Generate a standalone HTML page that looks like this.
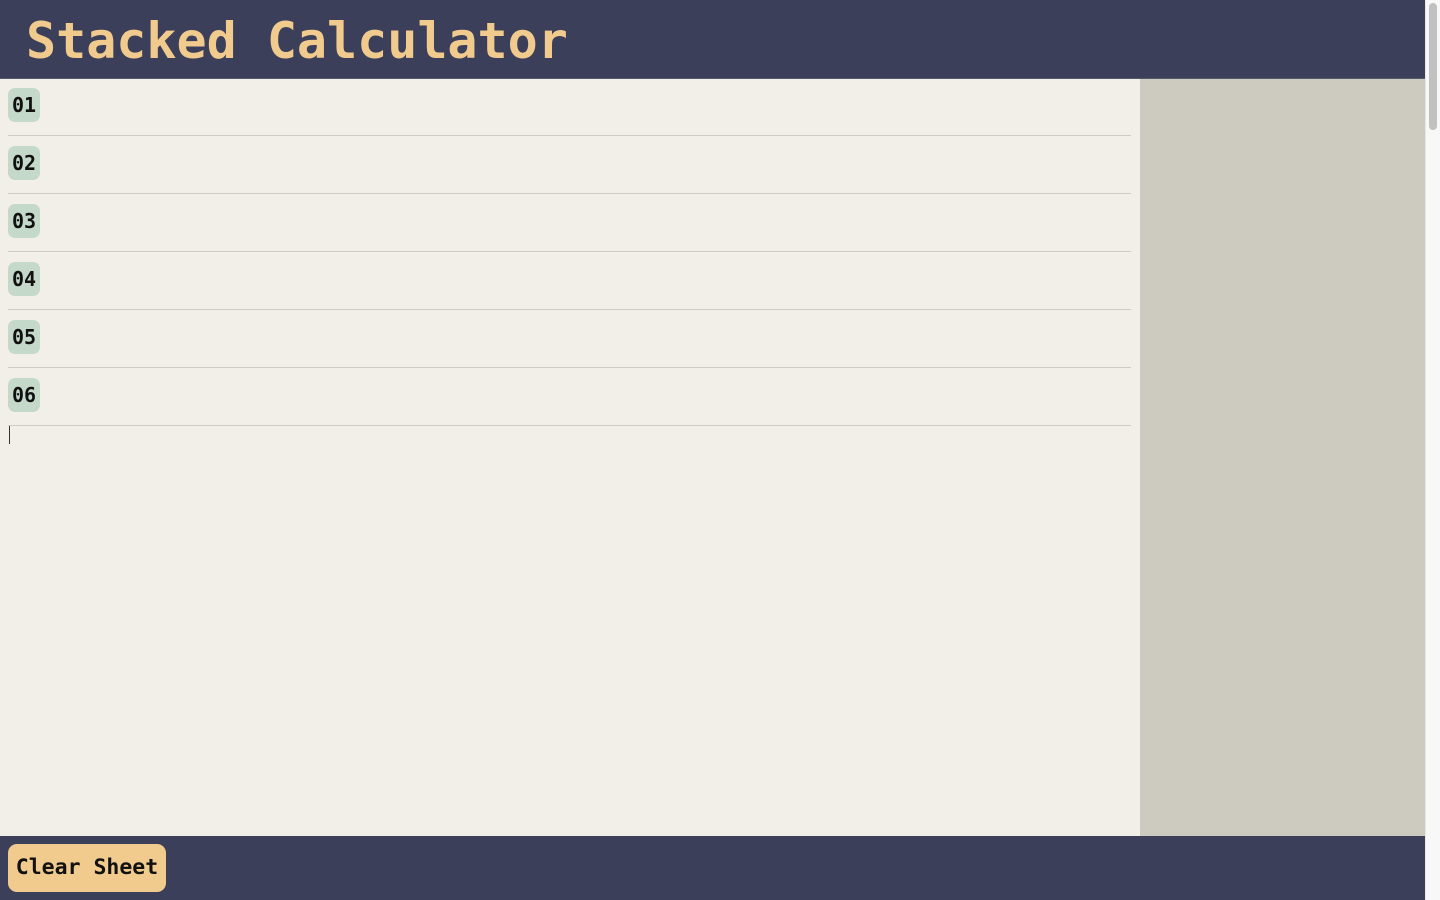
<!DOCTYPE html>
<html><head><style>
*{margin:0;padding:0;box-sizing:border-box}
body{width:1440px;height:900px;overflow:hidden;background:#f9f9f9;font-family:"DejaVu Sans Mono","Liberation Mono",monospace;position:relative}
.hdr{position:absolute;left:0;top:0;width:1425px;height:79px;background:#3c3f5a;border-bottom:1px solid #55576a}
.hdr h1{position:absolute;left:26px;top:8px;font-size:50px;font-weight:bold;color:#f1cb8e;letter-spacing:0;line-height:66px}
.main{position:absolute;left:0;top:79px;width:1140px;height:757px;background:#f2efe8}
.side{position:absolute;left:1140px;top:79px;width:285px;height:757px;background:#cdcbbf}
.row{position:absolute;left:8px;width:1123px;height:58px;border-bottom:1.5px solid #cfccc4}
.b{position:absolute;left:0;top:10px;width:32px;height:34px;background:#c5d9cb;border-radius:7px;font-size:20px;font-weight:bold;line-height:34px;text-align:center;color:#111}
.caret{position:absolute;left:9px;top:426px;width:1px;height:18px;background:#333}
.ftr{position:absolute;left:0;top:836px;width:1425px;height:64px;background:#3c3f5a}
.btn{position:absolute;left:8px;top:8px;width:158px;height:48px;background:#f1cb8e;border-radius:9px;font-size:21.5px;font-weight:bold;line-height:48px;text-align:center;color:#111}
.sb{position:absolute;left:1425px;top:0;width:15px;height:900px;background:#f8f8f8;border-left:1px solid #e8e8e8}
.th{position:absolute;left:1429px;top:3px;width:8px;height:127px;background:#c1c1c1;border-radius:4px}
</style></head><body>
<div class="hdr"><h1>Stacked Calculator</h1></div>
<div class="main"></div>
<div class="side"></div>
<div class="row" style="top:78px"><div class="b">01</div></div>
<div class="row" style="top:136px"><div class="b">02</div></div>
<div class="row" style="top:194px"><div class="b">03</div></div>
<div class="row" style="top:252px"><div class="b">04</div></div>
<div class="row" style="top:310px"><div class="b">05</div></div>
<div class="row" style="top:368px"><div class="b">06</div></div>
<div class="caret"></div>
<div class="ftr"><div class="btn">Clear Sheet</div></div>
<div class="sb"></div><div class="th"></div>
</body></html>
